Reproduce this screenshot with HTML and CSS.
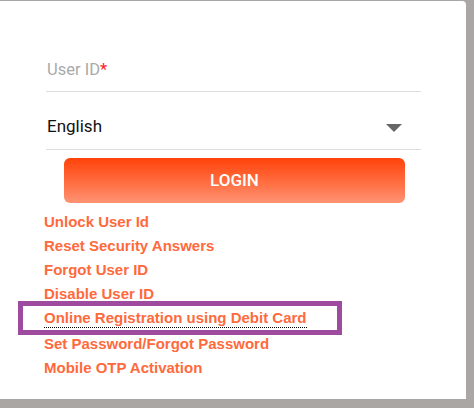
FILE: index.html
```html
<!DOCTYPE html>
<html>
<head>
<meta charset="utf-8">
<link rel="stylesheet" href="styles.css">
</head>
<body>
<div class="card">
  <div class="field">
    <span class="placeholder">User ID<span class="req">*</span></span>
  </div>
  <div class="field select">
    <span class="value">English</span>
    <svg class="caret" width="16" height="8" viewBox="0 0 16 8"><polygon points="0,0 16,0 8,8" fill="#666"/></svg>
  </div>
  <button class="login">LOGIN</button>
  <ul class="links">
    <li><a>Unlock User Id</a></li>
    <li><a>Reset Security Answers</a></li>
    <li><a>Forgot User ID</a></li>
    <li><a>Disable User ID</a></li>
    <li class="highlight"><a class="dotted">Online Registration using Debit Card</a></li>
    <li><a>Set Password/Forgot Password</a></li>
    <li><a>Mobile OTP Activation</a></li>
  </ul>
</div>
</body>
</html>
```
FILE: styles.css
```css
html, body {
  margin: 0;
  padding: 0;
  background: #a9a6a3;
}
body {
  width: 474px;
  height: 408px;
  overflow: hidden;
}
.card {
  box-sizing: border-box;
  margin-top: 1px;
  width: 466px;
  height: 398px;
  background: #fff;
  border-top-right-radius: 4px;
  padding: 46px 0 0 46px;
  font-family: Roboto, "Liberation Sans", sans-serif;
}
.field {
  width: 375px;
  height: 45px;
  border-bottom: 1px solid #ddd;
  box-sizing: border-box;
  display: flex;
  align-items: center;
  padding-left: 1px;
}
.field + .field {
  margin-top: 13px;
}
.placeholder {
  color: #aaa;
  font-size: 16.5px;
}
.req {
  color: #f22;
}
.select {
  justify-content: space-between;
  padding-right: 19px;
}
.value {
  color: #111;
  font-size: 17px;
  margin-bottom: 2px;
}
.caret {
  margin-top: 2px;
}
.login {
  display: block;
  margin: 8px 0 0 18px;
  width: 341px;
  height: 45px;
  border: 0;
  border-radius: 6px;
  background: linear-gradient(to bottom, #ff420a 0%, #ff6a3c 50%, #ff9373 100%);
  color: #fff;
  font-family: Roboto, "Liberation Sans", sans-serif;
  font-size: 17px;
  font-weight: 500;
  padding: 0 0 2px 0;
}
.links {
  list-style: none;
  margin: 7px 0 0 -28px;
  padding: 0;
  font-family: "Liberation Sans", Arial, sans-serif;
  font-weight: bold;
  font-size: 15px;
}
.links li {
  height: 24px;
  line-height: 24px;
  padding-left: 26px;
  box-sizing: border-box;
}
.links a {
  color: #ff6a3d;
}
.links li.highlight {
  width: 324px;
  height: 34px;
  margin: -5px 0 -3px 0;
  border: 5px solid #9e4a9e;
  padding-left: 21px;
  line-height: 24px;
}
.dotted {
  border-bottom: 1px dotted #000;
  padding-bottom: 1px;
}
```
